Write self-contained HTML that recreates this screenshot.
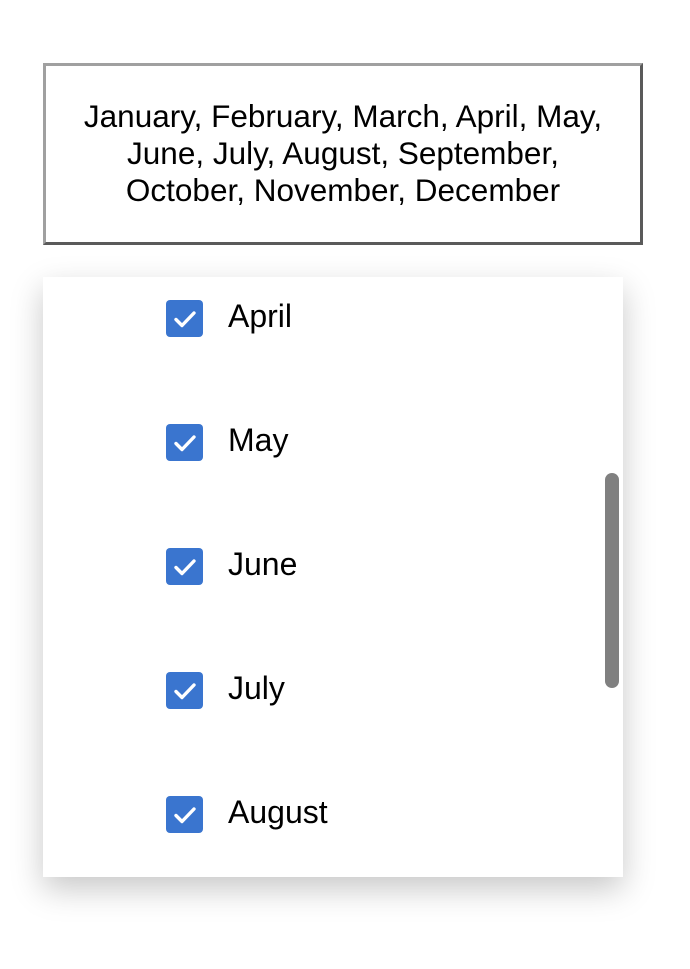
<!DOCTYPE html>
<html><head><style>
body{margin:0;width:690px;height:969px;background:#fff;font-family:"Liberation Sans",Arial,sans-serif;position:relative;overflow:hidden}
.box{position:absolute;left:43px;top:63px;width:594px;height:176px;border:3px solid;border-color:#a0a0a0 #5a5a5a #5a5a5a #a0a0a0;text-align:center;font-size:31.5px;line-height:37px;color:#000;box-sizing:content-box;white-space:nowrap}
.box div{padding-top:32px}
.panel{position:absolute;left:43px;top:277px;width:580px;height:600px;background:#fff;box-shadow:0 12px 30px rgba(0,0,0,0.22)}
.row{position:absolute;left:123px;height:37px;display:flex;align-items:center}
.cb{width:37px;height:37px;background:#3a75cf;border-radius:4px;display:flex;align-items:center;justify-content:center}
.lbl{margin-left:25px;font-size:32px;color:#000;position:relative;top:-2px}
.sb{position:absolute;left:562px;top:196px;width:14px;height:215px;background:#808080;border-radius:7px}
</style></head><body>
<div class="box"><div>January, February, March, April, May,<br>June, July, August, September,<br>October, November, December</div></div>
<div class="panel">
<div class="row" style="top:23px"><div class="cb"><svg width="26" height="26" viewBox="0 0 26 26"><path d="M4 13.5l6 6L22 7" fill="none" stroke="#fff" stroke-width="3.4" stroke-linecap="round" stroke-linejoin="round"/></svg></div><span class="lbl">April</span></div>
<div class="row" style="top:147px"><div class="cb"><svg width="26" height="26" viewBox="0 0 26 26"><path d="M4 13.5l6 6L22 7" fill="none" stroke="#fff" stroke-width="3.4" stroke-linecap="round" stroke-linejoin="round"/></svg></div><span class="lbl">May</span></div>
<div class="row" style="top:271px"><div class="cb"><svg width="26" height="26" viewBox="0 0 26 26"><path d="M4 13.5l6 6L22 7" fill="none" stroke="#fff" stroke-width="3.4" stroke-linecap="round" stroke-linejoin="round"/></svg></div><span class="lbl">June</span></div>
<div class="row" style="top:395px"><div class="cb"><svg width="26" height="26" viewBox="0 0 26 26"><path d="M4 13.5l6 6L22 7" fill="none" stroke="#fff" stroke-width="3.4" stroke-linecap="round" stroke-linejoin="round"/></svg></div><span class="lbl">July</span></div>
<div class="row" style="top:519px"><div class="cb"><svg width="26" height="26" viewBox="0 0 26 26"><path d="M4 13.5l6 6L22 7" fill="none" stroke="#fff" stroke-width="3.4" stroke-linecap="round" stroke-linejoin="round"/></svg></div><span class="lbl">August</span></div>
<div class="sb"></div>
</div>
</body></html>
